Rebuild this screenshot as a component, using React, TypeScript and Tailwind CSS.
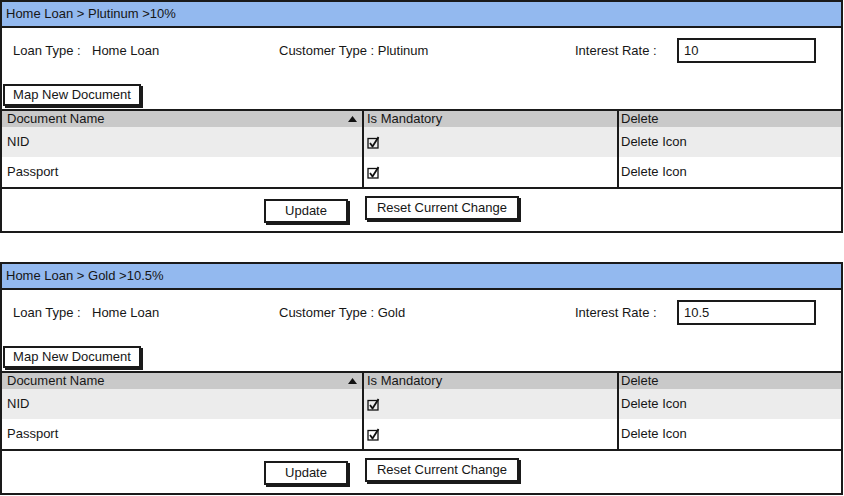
import React from "react";

type LoanPanelProps = {
  title: string;
  customerType: string;
  rate: string;
};

const documents = ["NID", "Passport"];

function CheckedBox() {
  return (
    <svg width="13" height="13" viewBox="0 0 13 13" className="block">
      <rect x="1" y="2.5" width="10" height="9.5" fill="none" stroke="#111" strokeWidth="1.3" />
      <path d="M3 7 L5.5 10.5 L11.5 1" fill="none" stroke="#111" strokeWidth="1.8" strokeLinejoin="round" />
    </svg>
  );
}

function SketchButton({ label, className }: { label: string; className: string }) {
  return (
    <div
      className={`flex items-center justify-center bg-white border-2 border-[#1a1a1a] shadow-[2px_2px_0_#1a1a1a] ${className}`}
    >
      {label}
    </div>
  );
}

function LoanPanel({ title, customerType, rate }: LoanPanelProps) {
  return (
    <section className="flex flex-col w-[843px]">
      {/* title bar */}
      <div className="h-[28px] border-2 border-[#1a1a1a] bg-[#93b9ef] flex items-center pl-[4px]">
        {title}
      </div>

      {/* loan info */}
      <div className="h-[81px] border-x-2 border-[#1a1a1a] flex flex-col">
        <div className="mt-[10px] h-[25px] flex items-center pl-[11px]">
          <div className="w-[266px] flex">
            <span className="w-[79px]">Loan Type :</span>
            <span>Home Loan</span>
          </div>
          <div className="w-[296px]">Customer Type : {customerType}</div>
          <div className="w-[102px]">Interest Rate :</div>
          <div className="w-[139px] h-[25px] border-2 border-[#1a1a1a] bg-white flex items-center pl-[5px]">
            {rate}
          </div>
        </div>
        <SketchButton label="Map New Document" className="mt-[21px] ml-[1px] w-[138px] h-[22px]" />
      </div>

      {/* documents table */}
      <div className="border-2 border-[#1a1a1a] flex flex-col">
        <div className="h-[16px] flex bg-[#c9c9c9] leading-[16px]">
          <div className="w-[362px] border-r-2 border-[#1a1a1a] pl-[5px] pr-[5px] flex items-center justify-between">
            <span>Document Name</span>
            <svg width="9" height="6" viewBox="0 0 9 6">
              <path d="M0 6 L4.5 0 L9 6 Z" fill="#111" />
            </svg>
          </div>
          <div className="w-[255px] border-r-2 border-[#1a1a1a] pl-[3px]">Is Mandatory</div>
          <div className="flex-1 pl-[2px]">Delete</div>
        </div>
        {documents.map((doc, i) => (
          <div key={doc} className={`flex h-[30px] ${i === 0 ? "bg-[#ececec]" : "bg-white"}`}>
            <div className="w-[362px] border-r-2 border-[#1a1a1a] pl-[5px] flex items-center">{doc}</div>
            <div className="w-[255px] border-r-2 border-[#1a1a1a] pl-[3px] flex items-center">
              <CheckedBox />
            </div>
            <div className="flex-1 pl-[2px] flex items-center">Delete Icon</div>
          </div>
        ))}
      </div>

      {/* actions */}
      <div className="h-[44px] border-2 border-t-0 border-[#1a1a1a] flex items-start pl-[262px] gap-[17px]">
        <SketchButton label="Update" className="mt-[10px] w-[84px] h-[24px]" />
        <SketchButton label="Reset Current Change" className="mt-[7px] w-[154px] h-[24px]" />
      </div>
    </section>
  );
}

export default function App() {
  return (
    <div className="w-[844px] h-[496px] bg-white text-[13px] text-[#161616] font-['Liberation_Sans',Arial,sans-serif] flex flex-col gap-[29px] overflow-hidden">
      <LoanPanel title="Home Loan > Plutinum >10%" customerType="Plutinum" rate="10" />
      <LoanPanel title="Home Loan > Gold >10.5%" customerType="Gold" rate="10.5" />
    </div>
  );
}
